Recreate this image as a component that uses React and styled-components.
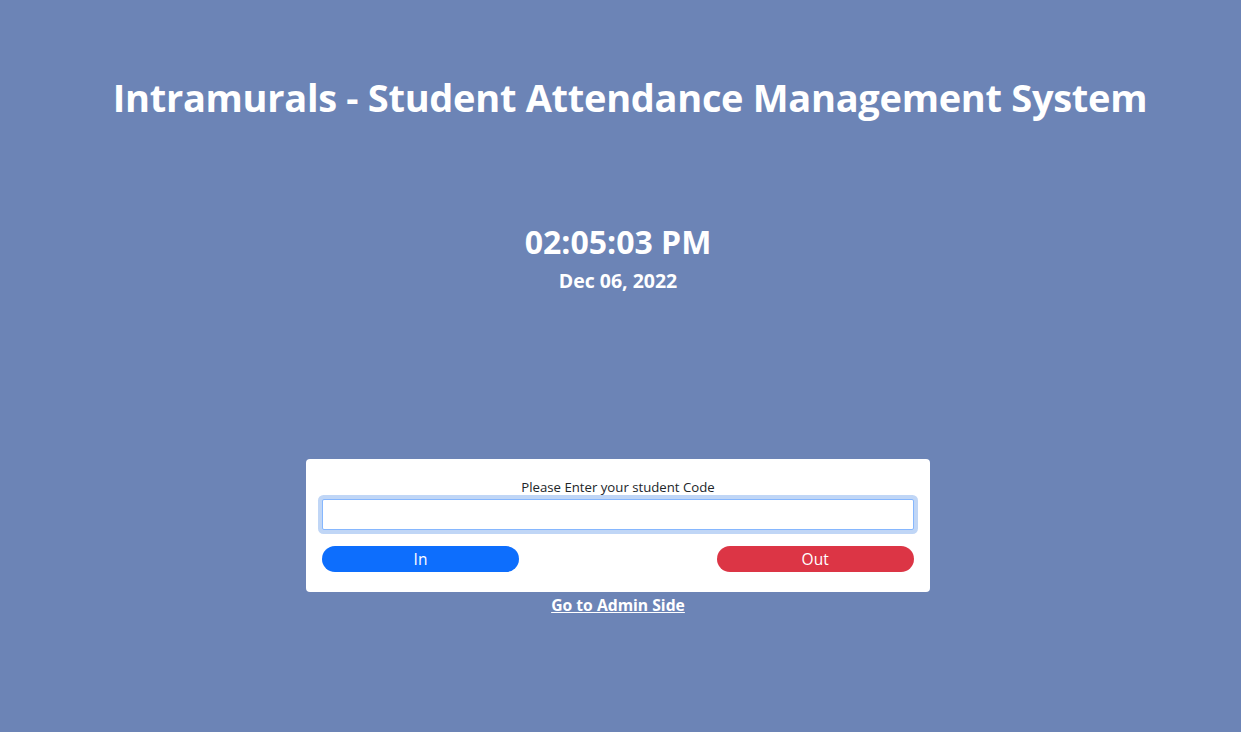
import React from 'react'
import styled, { createGlobalStyle } from 'styled-components'

const GlobalStyle = createGlobalStyle`
  html, body {
    margin: 0;
    padding: 0;
    background: #6c84b6;
    font-family: 'Open Sans', 'Noto Sans', sans-serif;
  }
  * {
    box-sizing: border-box;
  }
`

const Page = styled.div`
  min-height: 732px;
  display: flex;
  flex-direction: column;
  align-items: center;
  color: #fff;
  padding: 73px 5px 0 0;
`

const Title = styled.h1`
  margin: 0;
  padding-left: 24px;
  font-size: 38px;
  line-height: 48px;
  font-weight: 700;
  letter-spacing: -0.3px;
  text-align: center;
`

const Clock = styled.div`
  margin-top: 102px;
  display: flex;
  flex-direction: column;
  align-items: center;
  gap: 8px;
`

const Time = styled.h2`
  margin: 0;
  font-size: 32px;
  line-height: 38px;
  font-weight: 700;
`

const DateText = styled.h5`
  margin: 0;
  font-size: 19.5px;
  line-height: 24px;
  font-weight: 700;
`

const Card = styled.div`
  margin-top: 166px;
  width: 624px;
  background: #fff;
  border-radius: 4px;
  padding: 18px 16px 20px;
  display: flex;
  flex-direction: column;
`

const Label = styled.label`
  display: block;
  text-align: center;
  font-size: 13.2px;
  line-height: 20px;
  color: #212529;
`

const Input = styled.input`
  margin-top: 2px;
  width: 100%;
  height: 31px;
  border: 1px solid #86b7fe;
  border-radius: 2px;
  outline: none;
  box-shadow: 0 0 0 4px #c0d6f6;
  padding: 4px 8px;
  font-size: 16px;
  font-family: inherit;
  caret-color: #000;
`

const ButtonRow = styled.div`
  margin-top: 16px;
  display: grid;
  grid-template-columns: 1fr 1fr 1fr;
`

const Button = styled.button`
  grid-column: ${(p) => p.col};
  height: 26px;
  border: none;
  border-radius: 13px;
  color: #fff;
  font-family: inherit;
  font-size: 15.5px;
  background: ${(p) => (p.variant === 'out' ? '#dc3545' : '#0d6efd')};
  width: 197px;
  padding: 0;
  cursor: pointer;
`

const AdminLink = styled.a`
  margin-top: 3px;
  color: #fff;
  font-weight: 700;
  font-size: 15.7px;
  line-height: 20px;
  text-decoration: underline;
`

export default function App() {
  return (
    <>
      <GlobalStyle />
      <Page>
        <Title>Intramurals - Student Attendance Management System</Title>
        <Clock>
          <Time>02:05:03 PM</Time>
          <DateText>Dec 06, 2022</DateText>
        </Clock>
        <Card>
          <Label htmlFor='code'>Please Enter your student Code</Label>
          <Input id='code' type='text' autoFocus />
          <ButtonRow>
            <Button col={1}>In</Button>
            <Button col={3} variant='out'>Out</Button>
          </ButtonRow>
        </Card>
        <AdminLink href='#'>Go to Admin Side</AdminLink>
      </Page>
    </>
  )
}
